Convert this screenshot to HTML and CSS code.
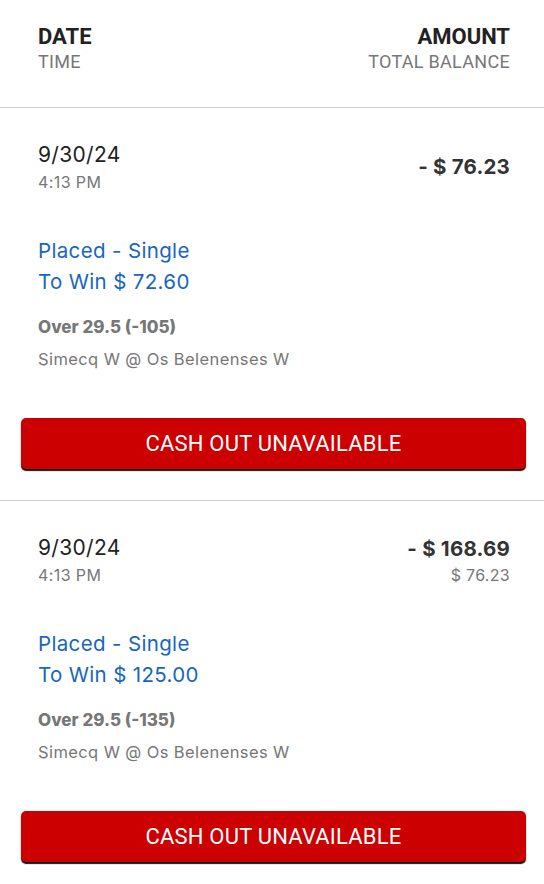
FILE: index.html
```html
<!DOCTYPE html>
<html lang="en">
<head>
  <meta charset="UTF-8" />
  <meta name="viewport" content="width=device-width, initial-scale=1.0"/>
  <title>Bet History</title>
  <link rel="stylesheet" href="styles.css">
</head>
<body>
  <header class="head-row">
    <div>
      <div class="head-main">DATE</div>
      <div class="head-sub">TIME</div>
    </div>
    <div class="right">
      <div class="head-main">AMOUNT</div>
      <div class="head-sub">TOTAL BALANCE</div>
    </div>
  </header>

  <!-- Bet 1 -->
  <section class="bet">
    <div class="bet-top">
      <div>
        <div class="date">9/30/24</div>
        <div class="time">4:13 PM</div>
      </div>
      <div class="right">
        <div class="amount">- $ 76.23</div>
      </div>
    </div>
    <div class="status">
      <div>Placed - Single</div>
      <div>To Win $ 72.60</div>
    </div>
    <div class="pick">Over 29.5 (-105)</div>
    <div class="match">Simecq W @ Os Belenenses W</div>
    <button class="cashout">CASH OUT UNAVAILABLE</button>
  </section>

  <!-- Bet 2 -->
  <section class="bet">
    <div class="bet-top">
      <div>
        <div class="date">9/30/24</div>
        <div class="time">4:13 PM</div>
      </div>
      <div class="right">
        <div class="amount">- $ 168.69</div>
        <div class="balance">$ 76.23</div>
      </div>
    </div>
    <div class="status">
      <div>Placed - Single</div>
      <div>To Win $ 125.00</div>
    </div>
    <div class="pick">Over 29.5 (-135)</div>
    <div class="match">Simecq W @ Os Belenenses W</div>
    <button class="cashout">CASH OUT UNAVAILABLE</button>
  </section>
</body>
</html>
```

FILE: styles.css
```css
body {
  margin: 0;
  padding: 0;
  background: #fff;
  color: #222;
  font-family: Inter, sans-serif;
}

.right {
  text-align: right;
}

.head-row {
  display: flex;
  justify-content: space-between;
  padding: 23px 34px 34px 38px;
  border-bottom: 1px solid #d0d0d0;
  font-family: Roboto, sans-serif;
}

.head-main {
  font-size: 22px;
  font-weight: 700;
  line-height: 28px;
  color: #222;
}

.head-sub {
  font-size: 18px;
  line-height: 22px;
  letter-spacing: 0.3px;
  color: #777;
}

.bet {
  padding: 31px 18px 31px 21px;
  border-bottom: 1px solid #d0d0d0;
}

.bet-top {
  display: flex;
  justify-content: space-between;
  align-items: center;
  padding: 0 16px 0 17px;
}

.date {
  font-size: 21px;
  line-height: 31px;
  letter-spacing: 0.3px;
  color: #222;
}

.time {
  font-size: 16px;
  line-height: 24px;
  letter-spacing: 0.4px;
  color: #777;
}

.amount {
  font-size: 20.5px;
  font-weight: 700;
  line-height: 30px;
  letter-spacing: 0.2px;
  color: #333;
}

.balance {
  font-size: 16px;
  line-height: 22px;
  letter-spacing: 0.3px;
  color: #777;
}

.status {
  margin-top: 41px;
  padding-left: 17px;
  font-size: 20.5px;
  line-height: 31px;
  letter-spacing: 0.35px;
  color: #1666c0;
}

.pick {
  margin-top: 18px;
  padding-left: 17px;
  font-size: 17px;
  font-weight: 800;
  line-height: 24px;
  color: #777;
}

.match {
  margin-top: 8px;
  padding-left: 17px;
  font-size: 16.5px;
  line-height: 24px;
  letter-spacing: 0.4px;
  color: #777;
}

.cashout {
  display: block;
  width: 100%;
  height: 51px;
  margin-top: 47px;
  border: none;
  border-radius: 5px;
  background: #cc0000;
  box-shadow: 0 2px 1px #111;
  color: #fff;
  font-family: Roboto, sans-serif;
  font-size: 22px;
  letter-spacing: 0.2px;
  cursor: pointer;
}
```
